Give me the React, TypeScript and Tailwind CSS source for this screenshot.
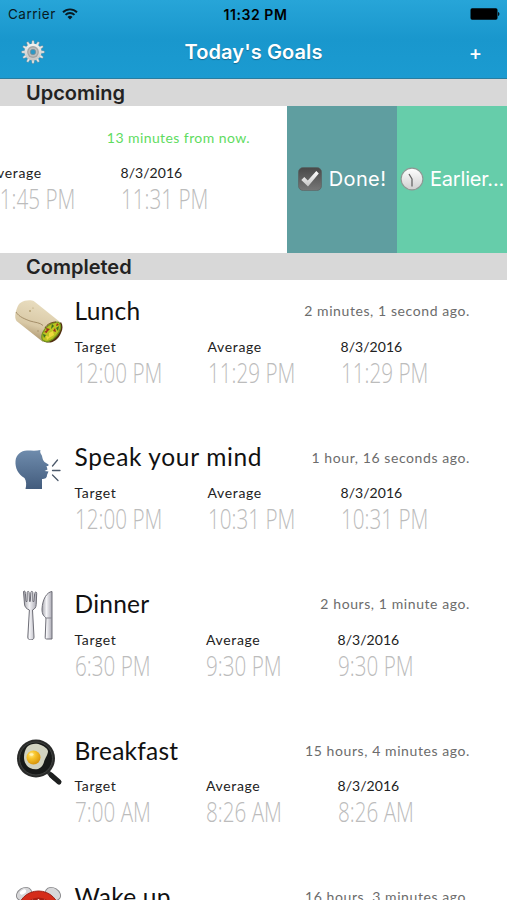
import React from "react";
import clsx from "clsx";

type Goal = {
  name?: string;
  icon?: React.ReactNode;
  when: string;
  target?: string;
  average: string;
  today: string;
};

const GearIcon = () => (
  <svg width="24" height="24" viewBox="0 0 24 24">
    <defs>
      <linearGradient id="gear" x1="0" y1="0" x2="0" y2="1">
        <stop offset="0" stopColor="#f6f6f4" />
        <stop offset="1" stopColor="#c2c3c2" />
      </linearGradient>
    </defs>
    <g fill="#e6e6e4" stroke="#54788c" strokeWidth="0.4">
      {Array.from({ length: 12 }, (_, i) => (
        <path key={i} d="M10.5 4.2 11 .5h2l.5 3.7z" transform={`rotate(${(i * 360) / 12} 12 12)`} />
      ))}
    </g>
    <circle cx="12" cy="12" r="8.6" fill="url(#gear)" />
    <circle cx="12" cy="12" r="5.9" fill="#a4a6a6" />
    <circle cx="12" cy="12" r="4.6" fill="#bcbdbc" />
    <circle cx="12" cy="12" r="2.7" fill="#2c98c6" stroke="#7f8c92" strokeWidth="0.7" />
  </svg>
);

const WifiIcon = () => (
  <svg width="16" height="12" viewBox="0 0 16 12" fill="none" stroke="#081a22" strokeWidth="1.9">
    <path d="M1 4.2a10 10 0 0 1 14 0" />
    <path d="M3.5 6.9a6.4 6.4 0 0 1 9 0" />
    <path d="M8 11.500 5.500 9a3.600 3.600 0 0 1 5 0z" fill="#081a22" stroke="none" />
  </svg>
);

const BatteryIcon = () => (
  <svg width="30" height="12" viewBox="0 0 30 12" fill="#000">
    <rect x="0.5" y="0.3" width="27" height="11.4" rx="1.6" />
    <path d="M28.1 4v4c1.7-.5 1.7-3.5 0-4z" />
  </svg>
);

const CheckIcon = () => (
  <svg width="24" height="24" viewBox="0 0 24 24" className="shrink-0">
    <defs>
      <linearGradient id="box" x1="0" y1="0" x2="0" y2="1">
        <stop offset="0" stopColor="#484848" />
        <stop offset="1" stopColor="#777" />
      </linearGradient>
      <linearGradient id="tick" x1="0" y1="0" x2="0" y2="1">
        <stop offset="0" stopColor="#fff" />
        <stop offset="1" stopColor="#c4c4c4" />
      </linearGradient>
    </defs>
    <rect x="0.4" y="0.4" width="23.2" height="23.2" rx="5" fill="url(#box)" stroke="#55605f" strokeWidth="0.6" />
    <path d="m3.3 13 3-3 3.5 3.6L18.3 4l2.5 2.4L10 19.5z" fill="url(#tick)" />
  </svg>
);

const ClockIcon = () => (
  <svg width="24" height="24" viewBox="0 0 24 24" className="shrink-0">
    <defs>
      <linearGradient id="face" x1="0" y1="0" x2="0" y2="1">
        <stop offset="0" stopColor="#fff" />
        <stop offset="1" stopColor="#cfcfcf" />
      </linearGradient>
    </defs>
    <circle cx="12" cy="12" r="10.9" fill="url(#face)" stroke="#8d9793" strokeWidth="1.1" />
    <path d="M12 19.5V12L9 7" fill="none" stroke="#666" strokeWidth="1.3" strokeLinejoin="round" />
  </svg>
);

const BurritoIcon = () => (
  <svg width="50" height="50" viewBox="0 0 50 50">
    <defs>
      <linearGradient id="wrap" x1="0.6" y1="0" x2="0.3" y2="1">
        <stop offset="0" stopColor="#eadfc2" />
        <stop offset="0.6" stopColor="#d9c9a6" />
        <stop offset="1" stopColor="#a28a62" />
      </linearGradient>
    </defs>
    <path d="M29 44c7 4 15 0 18-8 2-4 2-8 0-11L29 42z" fill="#512f10" />
    <path d="M1.500 16C3 11 4 7 7 5.500c3-2 7-2.500 11-2 1.500 0 2 1 3 1.500L46 25c-7-1-18 8-17 20L2.500 24c-1.500-2-1.500-5-1-8z" fill="url(#wrap)" />
    <path d="M2 15c3 5 9 7 14 9 5 1.500 10 1.500 13 4.500" fill="none" stroke="#9e8862" strokeWidth="0.9" />
    <path d="M28.500 43c-2-4 1-11 6-14.500C39 25 45 24 46 27c2 5-2 11-7 15-4 3-8 3-10.500 1z" fill="#bdc421" stroke="#76971c" strokeWidth="1.3" />
    <path d="m29 37 3 1-2 3zM38 27l2 2-3 3zM42 31l3-2-1 5z" fill="#397321" />
    <path d="m32 31 4 1-3 3zM39 34l2-3 1 4zM30 35l3-2v3zM43 26l2 2-3 1z" fill="#9e321c" />
    <path d="m35 36 4-2 1 4-5 3zM32 39l4 1-3 3z" fill="#efd93d" />
    <path d="M31 31c2-4 7-6 11-6" fill="none" stroke="#6b4a1e" strokeWidth="1" />
    <circle cx="16" cy="14" r="0.9" fill="#af996b" />
    <circle cx="19" cy="11" r="0.6" fill="#af996b" />
    <circle cx="24" cy="34" r="0.7" fill="#9e8862" />
  </svg>
);

const SpeakIcon = () => (
  <svg width="50" height="50" viewBox="0 0 50 50">
    <defs>
      <linearGradient id="head" x1="0" y1="0" x2="0" y2="1">
        <stop offset="0" stopColor="#6f8cad" />
        <stop offset="1" stopColor="#435c7d" />
      </linearGradient>
    </defs>
    <path
      d="M26.500 7c-1 3 1 4 1.500 6 .5 2.500 1 4.500 2.500 6l4 2.500c.5 1-.5 1.500-2 1.500l1 3.500-3 1.500 4 .5-1.500 3.500c0 3-2 4-5 4v10H11.500c1-4 1-8-1-11C4 31 1 25 1.500 18 2 12 7 7.500 13 7.500c5 0 9 .5 13.500-.5z"
      fill="url(#head)"
    />
    <path d="m38.500 23 5-6M38.500 27.500H46M38.500 32l5.500 5.500" stroke="#4c596a" strokeWidth="1.3" strokeLinecap="round" />
  </svg>
);

const CutleryIcon = () => (
  <svg width="50" height="50" viewBox="0 0 50 50">
    <defs>
      <linearGradient id="steel" x1="0" y1="0" x2="1" y2="0">
        <stop offset="0" stopColor="#a5a5ac" />
        <stop offset="0.45" stopColor="#f4f4f7" />
        <stop offset="1" stopColor="#a9a8b2" />
      </linearGradient>
    </defs>
    <path
      d="M9.500 1.500c1.500-1 1.800 0 1.900 2l.6 8h1l.2-9c.1-1.500 1.800-1.500 1.900 0l.4 9h.8l.5-9c.1-1.500 1.900-1.500 2 0l.1 9h1l.8-8c.2-2 2.100-2 2 0l-.5 11c-.2 3-1.400 4.500-3.700 5.500l1.500 27c.2 4-6.500 4-6.200 0l1.600-27c-3-1.200-4.700-3-4.900-6z"
      fill="url(#steel)"
      stroke="#6d6d76"
      strokeWidth="1"
    />
    <path d="M38 1.500V49h-5.500c-1.500 0-1.300-1-1.300-2l.8-19c-2-2-4-3-4-9C28.500 9 33 2 38 1.500z" fill="url(#steel)" stroke="#6d6d76" strokeWidth="1" />
    <path d="M31.500 28H38" stroke="#85858d" strokeWidth="1" />
  </svg>
);

const PanIcon = () => (
  <svg width="50" height="50" viewBox="0 0 50 50">
    <defs>
      <radialGradient id="yolk" cx="0.35" cy="0.3" r="0.7">
        <stop offset="0" stopColor="#ffe98b" />
        <stop offset="0.4" stopColor="#f8c52c" />
        <stop offset="1" stopColor="#d9960b" />
      </radialGradient>
    </defs>
    <path d="m33 35 8 8" stroke="#3a3d3d" strokeWidth="4" />
    <path d="m37 39 8 7" stroke="#1e2020" strokeWidth="5" strokeLinecap="round" />
    <circle cx="22" cy="22.5" r="19" fill="#292a29" />
    <circle cx="22" cy="22.5" r="16.5" fill="#171918" stroke="#464846" strokeWidth="0.9" />
    <path d="M13 11c4-4 10-4 14-2 4 2 6 3 7 6 0 4-3 7-4 11-2 7-8 9-14 6-4-2-6-6-6-11 0-4 1-7 3-10z" fill="#d1d2c0" />
    <circle cx="19.5" cy="21.5" r="7" fill="url(#yolk)" />
    <ellipse cx="17.5" cy="18.5" rx="2" ry="1.2" fill="#fff3b5" />
  </svg>
);

const AlarmIcon = () => (
  <svg width="50" height="50" viewBox="0 0 50 50">
    <path d="m14 10 3 5M33 10l-3 5" stroke="#777" strokeWidth="2" />
    <ellipse cx="10" cy="11" rx="8" ry="6" transform="rotate(-32 10 11)" fill="#d7d7d9" stroke="#858588" strokeWidth="0.9" />
    <ellipse cx="39" cy="11" rx="8" ry="6" transform="rotate(32 39 11)" fill="#d7d7d9" stroke="#858588" strokeWidth="0.9" />
    <ellipse cx="9" cy="9" rx="3.5" ry="2" transform="rotate(-32 9 9)" fill="#fff" />
    <circle cx="24.5" cy="29" r="21" fill="#d52c1a" stroke="#9d2117" strokeWidth="1" />
    <circle cx="24.5" cy="30" r="15.5" fill="#a91f14" />
    <path d="M24.500 16v3M18 17l1.500 2.500M31 17l-1.500 2.500" stroke="#f7d7cf" strokeWidth="1.5" />
  </svg>
);

const completed: Goal[] = [
  { name: "Lunch", icon: <BurritoIcon />, when: "2 minutes, 1 second ago.", target: "12:00 PM", average: "11:29 PM", today: "11:29 PM" },
  { name: "Speak your mind", icon: <SpeakIcon />, when: "1 hour, 16 seconds ago.", target: "12:00 PM", average: "10:31 PM", today: "10:31 PM" },
  { name: "Dinner", icon: <CutleryIcon />, when: "2 hours, 1 minute ago.", target: "6:30 PM", average: "9:30 PM", today: "9:30 PM" },
  { name: "Breakfast", icon: <PanIcon />, when: "15 hours, 4 minutes ago.", target: "7:00 AM", average: "8:26 AM", today: "8:26 AM" },
  { name: "Wake up", icon: <AlarmIcon />, when: "16 hours, 3 minutes ago.", target: "", average: "", today: "" },
];

const Stat = ({ label, value, date }: { label: string; value?: string; date?: boolean }) => (
  <div className="whitespace-nowrap">
    {value && (
      <>
        <div className={clsx("text-[14px] leading-5 text-[#222]", date ? "tracking-[0.05px]" : "tracking-[0.65px]")}>{label}</div>
        <div className="origin-left scale-x-[0.765] font-['Open_Sans'] text-[27px] font-light leading-[31px] text-[#bcbcbc]">{value}</div>
      </>
    )}
  </div>
);

const GoalRow = ({ goal, upcoming }: { goal: Goal; upcoming?: boolean }) => (
  <div className="flex h-[146.6px] w-[507px] shrink-0 pl-[14px] pr-[37px]">
    <div className="w-[60.5px] shrink-0 pt-[17px]">{goal.icon}</div>
    <div className="min-w-0 flex-1 pt-[15px]">
      <div className="flex h-8 items-center justify-between whitespace-nowrap">
        <span className={clsx("pt-px text-[24.5px] text-[#111]", goal.name === "Speak your mind" ? "tracking-[0.65px]" : "tracking-[0.25px]")}>
          {goal.name}
        </span>
        <span className={clsx("text-[14px]", upcoming ? "tracking-[0.42px] text-[#5fdc5f]" : "tracking-[0.59px] text-[#6c6c6c]")}>{goal.when}</span>
      </div>
      <div className={clsx("mt-[10px] grid", goal.average.length > 7 ? "grid-cols-[133px_133px_133px]" : "grid-cols-[131.5px_131.5px_131.5px]")}>
        <Stat label="Target" value={goal.target} />
        <Stat label="Average" value={goal.average} />
        <Stat label="8/3/2016" value={goal.today} date />
      </div>
    </div>
  </div>
);

const SectionHeader = ({ children }: { children: React.ReactNode }) => (
  <h2 className="flex h-[27px] shrink-0 items-center bg-[#d8d8d8] pl-[26px] pt-px font-['Inter'] text-[20px] font-semibold leading-none text-[#222]">
    {children}
  </h2>
);

const App: React.FC = () => {
  return (
    <div className="flex h-[900px] w-[507px] flex-col overflow-hidden bg-white font-['Lato',sans-serif]">
      <header className="h-[79px] shrink-0 border-b border-[#287da0] bg-linear-to-b from-[#27a5d8] via-[#1997cd] to-[#1b9bd1] font-['Inter']">
        <div className="grid h-7 grid-cols-3 items-center pl-2 pr-[7px] text-[#081a22]">
          <div className="flex items-center gap-[6px]">
            <span className="text-[13.5px] tracking-[0.5px]">Carrier</span>
            <WifiIcon />
          </div>
          <span className="pl-[3px] text-center text-[14px] font-semibold tracking-[0.55px] text-black">11:32 PM</span>
          <div className="flex justify-end">
            <BatteryIcon />
          </div>
        </div>
        <div className="grid h-12 grid-cols-[1fr_auto_1fr] items-center pl-[21px] pr-[25px]">
          <GearIcon />
          <h1 className="pl-1 text-[20px] font-semibold tracking-[0.1px] text-white [text-shadow:0_1px_1px_rgba(0,0,0,0.3)]">Today's Goals</h1>
          <span className="justify-self-end pt-[2px] text-[20px] font-medium text-white">+</span>
        </div>
      </header>

      <SectionHeader>Upcoming</SectionHeader>
      {/* Row swiped left, revealing its actions */}
      <div className="flex h-[146.6px] shrink-0 overflow-hidden">
        <div className="-ml-[220px] shrink-0">
          <GoalRow upcoming goal={{ when: "13 minutes from now.", average: "11:45 PM", today: "11:31 PM" }} />
        </div>
        <button className="flex w-[110px] shrink-0 items-center justify-center gap-[7px] bg-[#5f9ea0] font-['Inter'] text-[20px] tracking-[0.4px] text-white">
          <CheckIcon />
          Done!
        </button>
        <button className="flex w-[110px] shrink-0 items-center gap-[6px] bg-[#66cdaa] pl-[3px] font-['Inter'] text-[20px] tracking-[-0.2px] text-white">
          <ClockIcon />
          Earlier...
        </button>
      </div>

      <SectionHeader>Completed</SectionHeader>
      {completed.map((goal) => (
        <GoalRow key={goal.name} goal={goal} />
      ))}
    </div>
  );
};

export default App;
